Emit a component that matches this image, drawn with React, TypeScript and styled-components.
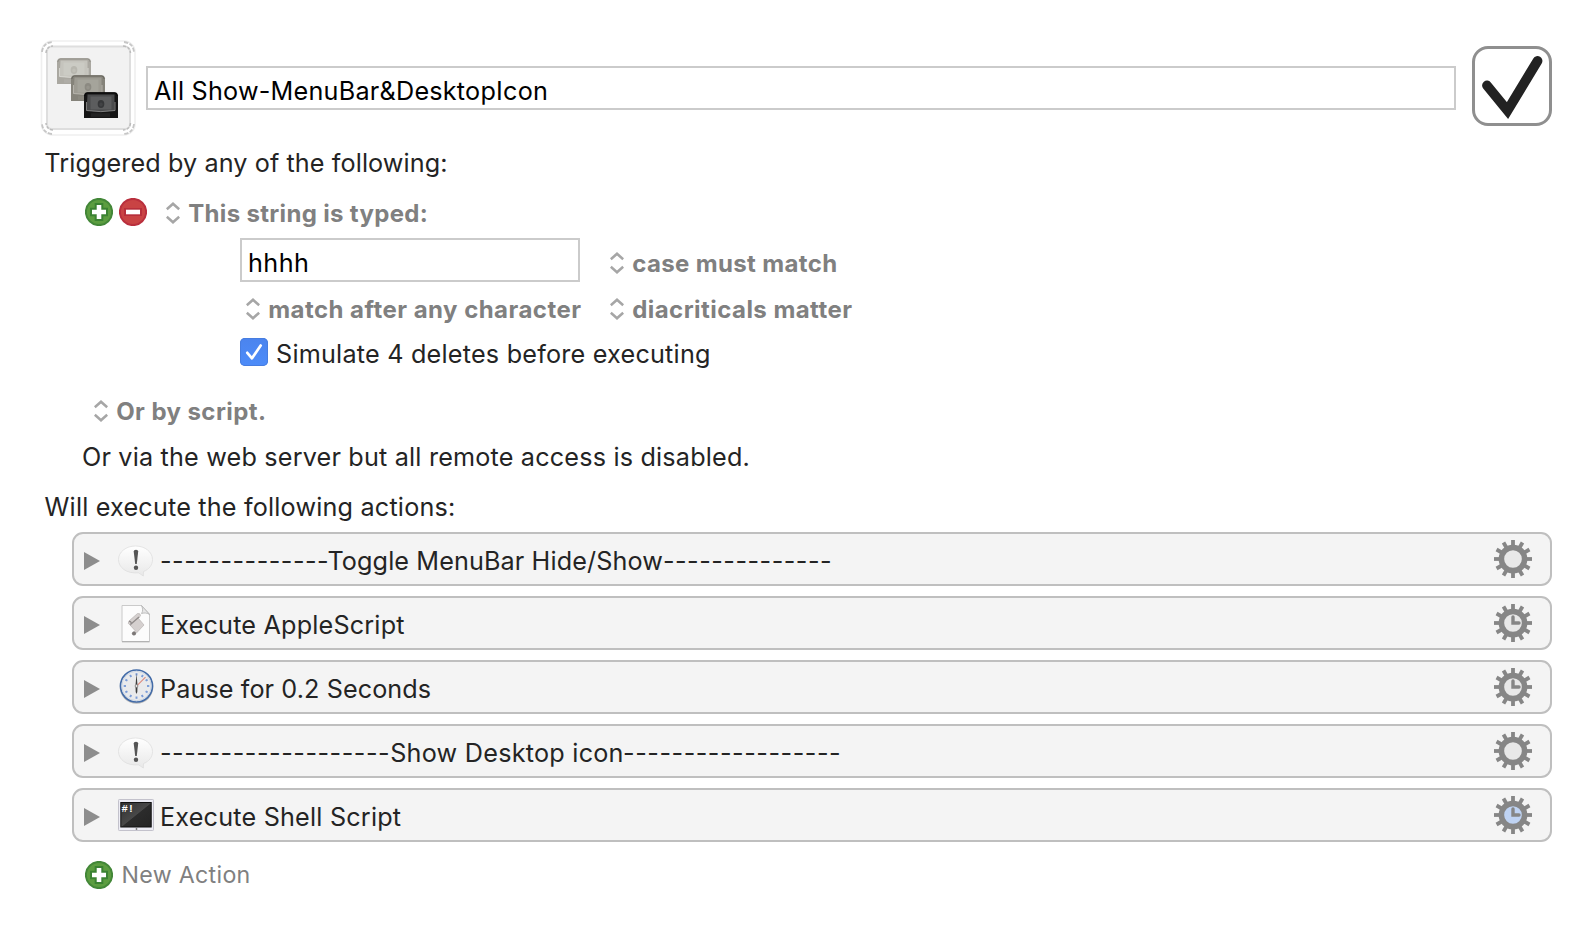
import React from 'react';
import styled, { createGlobalStyle } from 'styled-components';

const GlobalStyle = createGlobalStyle`
  * { box-sizing: border-box; }
  body { margin: 0; background: #fff; }
  svg { display: block; flex: none; }
`;

const Page = styled.main`
  width: 1592px;
  height: 930px;
  padding: 40px 40px 0;
  display: flex;
  flex-direction: column;
  background: #fff;
  color: #242424;
  font-family: Inter, 'Liberation Sans', sans-serif;
  overflow: hidden;
`;

const Text = styled.span<{ $track?: number }>`
  font-size: 25.2px;
  line-height: 36px;
  letter-spacing: ${(p) => p.$track ?? 0.16}px;
  white-space: pre;
`;

const MenuText = styled(Text)`
  font-size: 24px;
  line-height: 38px;
  font-weight: 700;
  color: #808080;
`;

const MutedText = styled(Text)`
  font-size: 23.2px;
  line-height: 38px;
  color: #808080;
`;

const Header = styled.header`
  display: flex;
  align-items: flex-start;
  height: 96px;
`;

const Field = styled.div<{ $width: number }>`
  width: ${(p) => p.$width}px;
  height: 44px;
  padding: 5px 0 0 6px;
  border: 2px solid #cbcbcb;
  background: #fff;
  color: #000;
  display: flex;
`;

const TitleField = styled(Field)`
  margin: 26px 16px 0 10px;
`;

const EnableBox = styled.div`
  width: 80px;
  height: 80px;
  margin-top: 6px;
  border: 3px solid #8f8f8f;
  border-radius: 16px;
`;

const Line = styled.div<{ $top: number; $left?: number }>`
  display: flex;
  align-items: flex-start;
  height: 36px;
  margin-top: ${(p) => p.$top}px;
  padding-left: ${(p) => p.$left ?? 0}px;
`;

const TriggerGrid = styled.div`
  display: grid;
  grid-template-columns: 340px auto;
  column-gap: 30px;
  row-gap: 9px;
  margin: 7px 0 0 200px;
`;

const MenuWrap = styled.div<{ $indent?: number; $top?: number }>`
  display: flex;
  gap: 8.2px;
  height: 36px;
  padding-left: ${(p) => p.$indent ?? 0}px;
  margin-top: ${(p) => p.$top ?? 0}px;
  svg { margin-top: 7px; }
`;

const Buttons = styled.div`
  display: flex;
  gap: 6px;
  padding: 3px 19px 0 0;
`;

const CheckBox = styled.span`
  width: 28px;
  height: 28px;
  margin: 2px 8px 0 0;
  border-radius: 5px;
  background: linear-gradient(#4b84ee, #4d8cf9);
  box-shadow: inset 0 0 0 1px #477de0;
`;

const ActionList = styled.section`
  display: flex;
  flex-direction: column;
  gap: 10px;
  margin: 7px 0 0 32px;
`;

const ActionRow = styled.div`
  display: flex;
  align-items: flex-start;
  height: 54px;
  padding: 0 18px 0 10px;
  border: 2px solid #bfbfbf;
  border-radius: 11px;
  background: #f4f4f4;
`;

const Disclosure = styled.svg`
  margin: 18px 16px 0 0;
`;

const IconSlot = styled.span`
  width: 40px;
  height: 40px;
  margin: 5px 4px 0 0;
`;

const ActionLabel = styled.div`
  flex: 1;
  display: flex;
  padding-top: 9px;
`;

const Part = styled(Text)<{ $pull?: number }>`
  margin-right: ${(p) => p.$pull ?? 0}px;
`;

const GearSlot = styled.span`
  margin-top: 5px;
`;

const AddSlot = styled.span`
  padding: 5px 8.5px 0 0;
`;

const Chevrons = () => (
  <svg width="14" height="22" viewBox="0 0 14 22" fill="none" stroke="#a6a6a6" strokeWidth="2.6">
    <path d="M0.8 7.2 7 1.8 13.2 7.2M0.8 14.8 7 20.2 13.2 14.8" />
  </svg>
);

const Menu = ({ text, track, indent, top }: { text: string; track: number; indent?: number; top?: number }) => (
  <MenuWrap $indent={indent} $top={top}>
    <Chevrons />
    <MenuText $track={track}>{text}</MenuText>
  </MenuWrap>
);

const AddIcon = () => (
  <svg width="28" height="28" viewBox="0 0 28 28">
    <circle cx="14" cy="14" r="13.1" fill="#5c9d40" stroke="#438738" strokeWidth="2" />
    <path d="M14 5v18M5 14h18" stroke="#3b8232" strokeWidth="8.6" />
    <path d="M14 7v14M7 14h14" stroke="#fff" strokeWidth="4.6" />
  </svg>
);

const RemoveIcon = () => (
  <svg width="28" height="28" viewBox="0 0 28 28">
    <circle cx="14" cy="14" r="13.1" fill="#c94344" stroke="#b92f3d" strokeWidth="2" />
    <rect x="5" y="10" width="18" height="8" fill="#b72f3b" />
    <rect x="7" y="11.7" width="14" height="4.6" fill="#fff" />
  </svg>
);

const Device = ({ x, y, body, edge, screen, shine, dial }: {
  x: number; y: number; body: string; edge: string; screen: string; shine: string; dial: string;
}) => (
  <g transform={`translate(${x} ${y})`}>
    <path d="M0 26V3.5Q.4 .5 3 .3H31Q33.600 .5 34 3.500V26Z" fill={body} />
    <path d="M.8 4Q1 1.200 3.500 .9H30.500Q33 1.200 33.200 4" fill="none" stroke={edge} strokeWidth="1" />
    <path d="M3.500 2.500H30.500V18.500Q17 20.500 2.500 18.500Z" fill={screen} />
    <rect x="6.500" y="4.500" width="21" height="13" fill={shine} opacity=".22" />
    <ellipse cx="17" cy="12" rx="3.300" ry="4" fill={dial} opacity=".65" />
    <ellipse cx="17" cy="12.500" rx="1.700" ry="2" fill={screen} opacity=".6" />
    <path d="M2.500 10V18.500Q17 20.800 31 18.500V10" fill="none" stroke={shine} strokeWidth=".9" opacity=".8" />
    <rect x="7" y="21.200" width="19" height="3.600" fill={shine} opacity=".1" />
  </g>
);

const MacroIcon = () => (
  <svg width="96" height="96" viewBox="0 0 96 96">
    <rect x="1.500" y="1" width="93.500" height="94" rx="11" fill="#fff" stroke="#efefef" strokeWidth="1.600" />
    <path d="M2 12Q3 3 12 2M84 2Q93 3 94 12M94 84Q93 93 84 94M12 94Q3 93 2 84" fill="none" stroke="#c6c6c6" strokeWidth="1.800" strokeDasharray="4 1.500" />
    <rect x="7" y="6.500" width="83" height="82.500" rx="5" fill="#f2f2f2" stroke="#dedede" strokeWidth="2" />
    <path d="M6 13Q6.500 6.500 13 6M83 6Q90 6.500 90.500 13M90.500 83Q90 89.500 83 90M13 90Q6.500 89.500 6 83" fill="none" stroke="#bcbcbc" strokeWidth="1.500" strokeDasharray="3 1.500" />
    <Device x={17} y={18} body="#aaa8a1" edge="#918f88" screen="#c5c4bd" shine="#e3e3de" dial="#adaca5" />
    <Device x={31} y={35} body="#85837a" edge="#69675f" screen="#9d9b92" shine="#c4c2bb" dial="#7e7c74" />
    <Device x={44} y={52} body="#151515" edge="#080808" screen="#4a4b4c" shine="#a0a0a0" dial="#242526" />
  </svg>
);

const EnableTick = () => (
  <svg width="74" height="74" viewBox="0 0 74 74">
    <path d="M12 36.500 32.500 61.500 62.500 12" fill="none" stroke="#222" strokeWidth="9.800" strokeLinecap="round" strokeLinejoin="miter" />
  </svg>
);

const SmallTick = () => (
  <svg width="28" height="28" viewBox="0 0 28 28">
    <path d="M7.300 14.800 12 20.300 20.700 7.500" fill="none" stroke="#fff" strokeWidth="2.700" strokeLinecap="round" strokeLinejoin="round" />
  </svg>
);

const BubbleIcon = () => (
  <svg width="40" height="40" viewBox="0 0 40 40">
    <defs>
      <linearGradient id="bubble" x1="0" y1="0" x2="0" y2="1">
        <stop offset="0" stopColor="#fff" />
        <stop offset="1" stopColor="#e8e8e8" />
      </linearGradient>
    </defs>
    <path d="M19.500 7C29 7 36.500 13 36.500 20.500 36.500 26 33 30.500 27.500 32.500L27.300 37 22.500 33.800C10.500 35 2.500 28.500 2.500 20.500 2.500 13 10 7 19.500 7Z" fill="url(#bubble)" stroke="#dedede" strokeWidth=".8" />
    <path d="M17.700 12.500Q17.700 10.800 20 10.800 22.200 10.800 22.200 12.500L20.800 25H19.200Z" fill="#555" />
    <circle cx="20" cy="28.700" r="2.200" fill="#555" />
  </svg>
);

const ScriptIcon = () => (
  <svg width="40" height="40" viewBox="0 0 40 40">
    <path d="M6 2.500H25.500L33.500 11V38.500H6Z" fill="#fcfcfc" stroke="#c4c4c4" strokeWidth=".9" />
    <path d="M6 38.800H33.500" stroke="#aaa" strokeWidth="1" />
    <path d="M25.500 2.500C27 6 27 8 25.500 10.500 29 9.500 31 10 33.500 11.500Z" fill="#e6e6e6" stroke="#b2b2b2" strokeWidth=".8" />
    <path d="M13 18 21.500 10.500Q24.500 10 24.500 12.500L22.500 15.500 28 22 20 30.500Q17 33.500 16 30.500L19 27.500 14 22Q11 20.500 13 18Z" fill="#d5d0cf" stroke="#b8b3b2" strokeWidth=".7" />
    <path d="M13 18.500Q15.500 18 15 21L23 14" fill="none" stroke="#8f8a89" strokeWidth="1.300" />
    <circle cx="18" cy="30.500" r="2" fill="#7b7776" />
  </svg>
);

const ClockIcon = () => (
  <svg width="40" height="40" viewBox="0 0 40 40">
    <circle cx="20.500" cy="20" r="16.800" fill="#b9b9b9" />
    <circle cx="20.500" cy="19" r="16" fill="#e9eaec" stroke="#426ba8" strokeWidth="1.600" />
    <circle cx="20.500" cy="19" r="14.700" fill="none" stroke="#c3cfe0" strokeWidth=".8" />
    {Array.from({ length: 12 }, (_, i) => (
      <path key={i} d="M20.500 6.200v2.300" stroke="#7a9cd8" strokeWidth="1.900" transform={`rotate(${i * 30} 20.500 19)`} />
    ))}
    <path d="M21 18.700 29.500 10.200" stroke="#dd897c" strokeWidth="1.100" />
    <path d="M20.500 6.500 21.500 18.500 21.300 25 20.500 27 19.700 25 19.500 18.500Z" fill="#3c3c3c" />
    <circle cx="20.500" cy="19" r="1.400" fill="#eee" stroke="#666" strokeWidth=".6" />
  </svg>
);

const Prompt = styled.text`
  font: 700 10.5px 'Liberation Mono', monospace;
  letter-spacing: 0;
`;

const ShellIcon = () => (
  <svg width="40" height="40" viewBox="0 0 40 40">
    <defs>
      <linearGradient id="screen" x1="0" y1="0" x2="1" y2="1">
        <stop offset="0" stopColor="#303030" />
        <stop offset=".5" stopColor="#484848" />
        <stop offset=".52" stopColor="#2c2c2c" />
        <stop offset="1" stopColor="#242424" />
      </linearGradient>
    </defs>
    <rect x="2.500" y="4.500" width="35" height="31" rx=".8" fill="#ececf4" stroke="#c3c2cc" strokeWidth="1" />
    <rect x="4.800" y="7.500" width="30.400" height="24.500" fill="url(#screen)" stroke="#111" strokeWidth="1" />
    <Prompt x="5.500" y="17" fill="#fff">#!</Prompt>
    <circle cx="20.500" cy="34" r=".9" fill="#777" />
  </svg>
);

type Face = 'plain' | 'timed' | 'active';

const Gear = ({ face }: { face: Face }) => (
  <svg width="38" height="40" viewBox="0 0 38 40">
    {Array.from({ length: 12 }, (_, i) => (
      <path key={i} d="M19 1v6" stroke="#868686" strokeWidth="3.800" transform={`rotate(${i * 30} 19 20)`} />
    ))}
    <circle cx="19" cy="20" r="11.600" fill={face === 'active' ? '#bfd3f3' : '#e8e8e8'} stroke="#868686" strokeWidth="5.500" />
    {face !== 'plain' && <path d="M19 14V20H25" fill="none" stroke="#868686" strokeWidth="3.400" strokeLinecap="round" strokeLinejoin="miter" />}
  </svg>
);

type Segment = { text: string; track: number; pull?: number };
type Action = { icon: React.ReactNode; face: Face; parts: Segment[] };

const actions: Action[] = [
  {
    icon: <BubbleIcon />, face: 'plain', parts: [
      { text: '--------------', track: 0.5, pull: -1.8 },
      { text: 'Toggle MenuBar Hide/Show', track: 0.11 },
      { text: '--------------', track: 0.5 },
    ],
  },
  { icon: <ScriptIcon />, face: 'timed', parts: [{ text: 'Execute AppleScript', track: 0.18 }] },
  { icon: <ClockIcon />, face: 'timed', parts: [{ text: 'Pause for 0.2 Seconds', track: 0.09 }] },
  {
    icon: <BubbleIcon />, face: 'plain', parts: [
      { text: '-------------------', track: 0.53 },
      { text: 'Show Desktop icon', track: 0.24, pull: -0.7 },
      { text: '------------------', track: 0.53 },
    ],
  },
  { icon: <ShellIcon />, face: 'active', parts: [{ text: 'Execute Shell Script', track: 0.2 }] },
];

export default function App() {
  return (
    <>
      <GlobalStyle />
      <Page>
        <Header>
          <MacroIcon />
          <TitleField $width={1310}>
            <Text $track={0.228}>All Show-MenuBar&amp;DesktopIcon</Text>
          </TitleField>
          <EnableBox><EnableTick /></EnableBox>
        </Header>

        <Line $top={9} $left={4.3}><Text $track={0.1}>Triggered by any of the following:</Text></Line>

        <Line $top={14} $left={45}>
          <Buttons><AddIcon /><RemoveIcon /></Buttons>
          <Menu text="This string is typed:" track={0.33} />
        </Line>

        <TriggerGrid>
          <Field $width={340}><Text $track={0.44}>hhhh</Text></Field>
          <Menu text="case must match" track={0.36} top={7} />
          <Menu text="match after any character" track={0.46} indent={6} />
          <Menu text="diacriticals matter" track={0.45} />
        </TriggerGrid>

        <Line $top={9} $left={200}>
          <CheckBox><SmallTick /></CheckBox>
          <Text $track={0.216}>Simulate 4 deletes before executing</Text>
        </Line>

        <Line $top={21} $left={54}><Menu text="Or by script." track={0.42} /></Line>
        <Line $top={10} $left={42}>
          <Text $track={0.183}>Or via the web server but all remote access is disabled.</Text>
        </Line>
        <Line $top={14} $left={4.6}><Text $track={0.19}>Will execute the following actions:</Text></Line>

        <ActionList>
          {actions.map((action, i) => (
            <ActionRow key={i}>
              <Disclosure width="16" height="18" viewBox="0 0 16 18"><path d="M0 0 16 9 0 18Z" fill="#8d8d8d" /></Disclosure>
              <IconSlot>{action.icon}</IconSlot>
              <ActionLabel>
                {action.parts.map((part, n) => (
                  <Part key={n} $track={part.track} $pull={part.pull}>{part.text}</Part>
                ))}
              </ActionLabel>
              <GearSlot><Gear face={action.face} /></GearSlot>
            </ActionRow>
          ))}
        </ActionList>

        <Line $top={14} $left={45}>
          <AddSlot><AddIcon /></AddSlot>
          <MutedText $track={0.3}>New Action</MutedText>
        </Line>
      </Page>
    </>
  );
}
